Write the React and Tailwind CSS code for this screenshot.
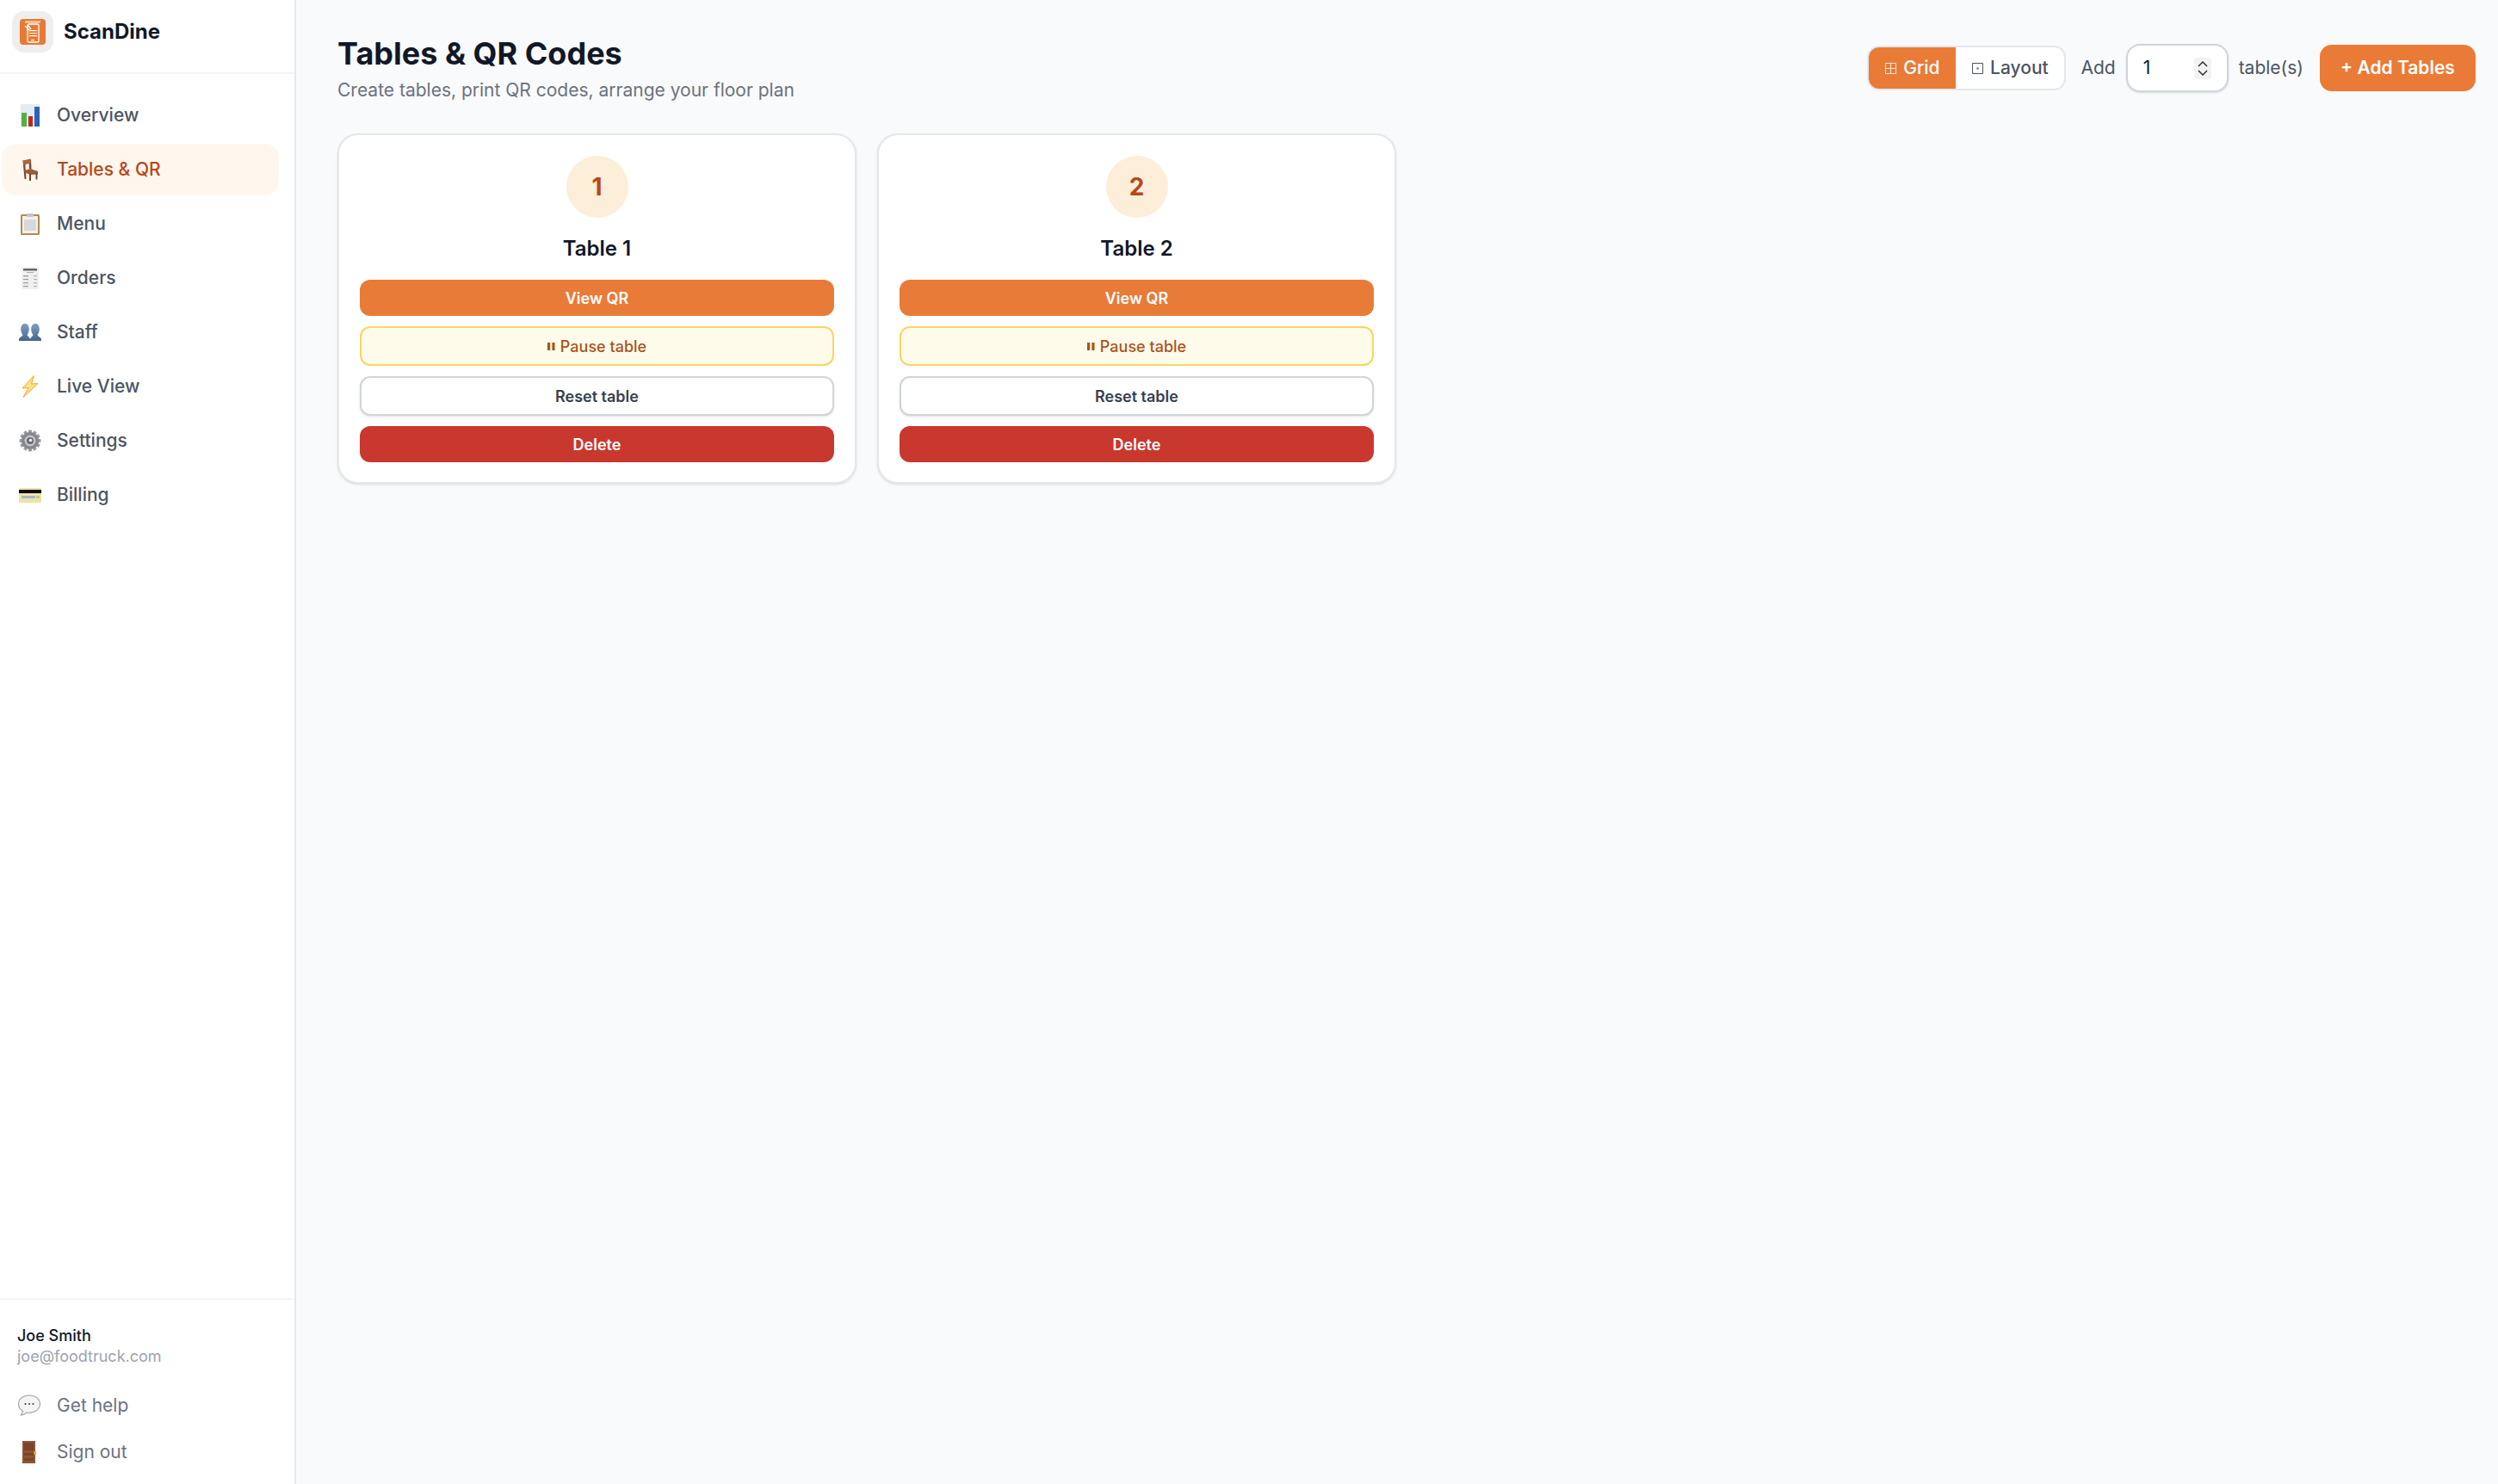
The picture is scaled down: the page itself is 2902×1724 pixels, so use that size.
const font = { fontFamily: 'Inter, "Liberation Sans", sans-serif' };

function ChartIcon() {
  return (
    <svg viewBox="0 0 22 26" className="h-[26px] w-[22px]">
      <rect width="22" height="26" fill="#e4ebf1" />
      <rect x="1" y="10" width="6" height="16" fill="#52b240" />
      <rect x="9" y="14" width="5" height="12" fill="#bf2a1f" />
      <rect x="16" y="3" width="6" height="23" fill="#2a62bd" />
    </svg>
  );
}

function ChairIcon() {
  return (
    <svg viewBox="0 0 20 26" className="h-[26px] w-[20px]">
      <path d="M1.500 2.500h2.500L5.500 24H3.500z" fill="#80472b" />
      <path d="M8.500 1.500h2.500l.5 11h-2.500z" fill="#80472b" />
      <path d="M1.500 2.500L10.500 .5l.5 5-8.500 2z" fill="#a9663f" />
      <path d="M4 14l6-2 9 3v3.500l-9 .5-6-2.500z" fill="#9c5c38" />
      <rect x="16.500" y="17" width="2" height="7.500" fill="#80472b" />
      <rect x="9" y="18" width="2" height="8" fill="#744026" />
    </svg>
  );
}

function ClipboardIcon() {
  return (
    <svg viewBox="0 0 22 26" className="h-[26px] w-[22px]">
      <rect y="2" width="22" height="24" rx="1.500" fill="#b18a52" />
      <rect x="2" y="4" width="18" height="20" fill="#f1f1f1" />
      <rect x="4" y="8" width="14" height="13" fill="#d8d8d8" />
      <rect x="7" y="1" width="8" height="4" rx="1.500" fill="#bcc4cc" />
    </svg>
  );
}

function ReceiptIcon() {
  return (
    <svg viewBox="0 0 20 26" className="h-[26px] w-[20px]">
      <rect width="20" height="26" fill="#f0f0f0" />
      <rect x="2" y="2" width="16" height="2.500" fill="#666" />
      <rect x="6" y="6" width="8" height="1" fill="#aaa" />
      {[10, 14, 18, 22].map((y) => (
        <g key={y}>
          <rect x="2" y={y} width="6" height="1.200" fill="#999" />
          <rect x="14" y={y} width="4" height="1.200" fill="#b5b5b5" />
        </g>
      ))}
    </svg>
  );
}

function StaffIcon() {
  const id = 'bust';
  return (
    <svg viewBox="0 0 26 20" className="h-[20px] w-[26px]">
      <defs>
        <linearGradient id={id} x1="0" y1="0" x2="0" y2="1">
          <stop offset="0" stopColor="#7fa0c2" />
          <stop offset="1" stopColor="#44658c" />
        </linearGradient>
      </defs>
      <path d="M0 20v-2c0-2 4-3 4.500-5C2.800 11 2.200 8.500 2.200 6.500 2.200 2.500 4 0 7 0s4.800 2.500 4.800 6.500c0 2-.6 4.500-2.300 6.500.5 2 3.500 3 3.500 5v2z" fill={`url(#${id})`} />
      <path d="M13 20v-2c0-2 3-3 3.500-5-1.700-2-2.300-4.500-2.300-6.500C14.200 2.500 16 0 19 0s4.800 2.500 4.800 6.500c0 2-.6 4.500-2.300 6.500.5 2 4.500 3 4.500 5v2z" fill={`url(#${id})`} />
    </svg>
  );
}

function ZapIcon() {
  return (
    <svg viewBox="0 0 20 26" className="h-[26px] w-[20px]">
      <path d="M14.500 0.500L1 15l7-.5L2 25.500 19 9.500l-7.500 .5z" fill="#ffe08a" stroke="#f5a623" strokeWidth="1" strokeLinejoin="round" />
    </svg>
  );
}

function GearIcon() {
  const teeth = [0, 30, 60, 90, 120, 150, 180, 210, 240, 270, 300, 330];
  return (
    <svg viewBox="0 0 26 26" className="h-[26px] w-[26px]">
      {teeth.map((a) => (
        <rect key={a} x="11" y="0.500" width="4" height="6" rx="1" fill="#9a9ca1" transform={`rotate(${a} 13 13)`} />
      ))}
      <circle cx="13" cy="13" r="10" fill="#85878c" />
      <circle cx="13" cy="13" r="6.500" fill="#c4c5c8" />
      <circle cx="13" cy="13" r="4" fill="#6a6c71" />
      <circle cx="13.500" cy="12.500" r="1.800" fill="#f0f0f0" />
    </svg>
  );
}

function CardIcon() {
  return (
    <svg viewBox="0 0 26 17" className="h-[17px] w-[26px]">
      <rect width="26" height="17" rx="1" fill="#ebe3a8" />
      <rect y="2" width="26" height="4" fill="#0c0c0c" />
      <rect x="3" y="9" width="16" height="3" fill="#aab4c8" />
      <rect x="20" y="9" width="4" height="3" fill="#c9c28a" />
    </svg>
  );
}

function BubbleIcon() {
  return (
    <svg viewBox="0 0 26 26" className="h-[26px] w-[26px]">
      <path d="M13 1C6 1 .5 5 .5 11c0 3.500 2 6.500 5 8.300-.3 1.700-1.200 3.300-2.200 4.700 2.600-.3 5-1.500 6.700-3 1 .2 2 .3 3 .3 7 0 12.500-4.500 12.500-10.300S20 1 13 1z" fill="#f5f5f5" stroke="#a8a8a8" strokeWidth="1.200" />
      <circle cx="8.500" cy="11" r="1.100" fill="#444" />
      <circle cx="13" cy="11" r="1.100" fill="#444" />
      <circle cx="17.500" cy="11" r="1.100" fill="#444" />
    </svg>
  );
}

function DoorIcon() {
  return (
    <svg viewBox="0 0 16 26" className="h-[26px] w-[16px]">
      <rect width="15" height="26" fill="#8e5436" />
      <rect x="2" y="2" width="11" height="9" fill="#7b4529" />
      <rect x="2" y="14" width="11" height="3" fill="#7b4529" />
      <rect x="2" y="20" width="11" height="3" fill="#7b4529" />
      <rect x="13.500" y="12" width="2.500" height="4" fill="#e2b33c" />
    </svg>
  );
}

function Logo() {
  return (
    <svg viewBox="0 0 30 30" className="h-[30px] w-[30px]">
      <rect width="30" height="30" rx="4" fill="#e97a33" />
      <rect x="6" y="2.500" width="18" height="2" fill="#fbd9c2" />
      <rect x="9" y="6" width="13" height="21" rx="1.500" fill="none" stroke="#fff" strokeWidth="1.300" />
      <path d="M6 8l6 6M9 7l4 5" stroke="#fff" strokeWidth="1.300" />
      <rect x="11" y="13" width="9" height="1.200" fill="#fff" />
      <rect x="11" y="16" width="9" height="1.200" fill="#fde5d4" />
      <rect x="11" y="19" width="9" height="1.200" fill="#fff" />
      <rect x="13" y="24" width="4" height="1.200" fill="#fff" />
    </svg>
  );
}

const navItems = [
  { label: 'Overview', icon: <ChartIcon /> },
  { label: 'Tables & QR', icon: <ChairIcon />, active: true },
  { label: 'Menu', icon: <ClipboardIcon /> },
  { label: 'Orders', icon: <ReceiptIcon /> },
  { label: 'Staff', icon: <StaffIcon /> },
  { label: 'Live View', icon: <ZapIcon /> },
  { label: 'Settings', icon: <GearIcon /> },
  { label: 'Billing', icon: <CardIcon /> },
];

function Sidebar() {
  return (
    <aside className="flex h-full w-[344px] shrink-0 flex-col border-r-2 border-[#e5e7eb] bg-white">
      <div className="flex h-[86px] items-center gap-[12px] border-b-2 border-[#f3f4f6] pb-[16px] pl-[14px] pt-[6px]">
        <div className="flex h-[48px] w-[48px] items-center justify-center rounded-[14px] bg-[#eeeeee]">
          <Logo />
        </div>
        <span className="text-[24px] font-bold text-[#111827]">ScanDine</span>
      </div>
      <nav className="flex flex-col gap-[3px] pl-[2px] pr-[18px] pt-[18px]">
        {navItems.map((item) => (
          <a
            key={item.label}
            className={
              item.active
                ? 'flex h-[60px] items-center gap-[18px] rounded-[16px] bg-[#fff7ed] pl-[20px] text-[21px] font-medium text-[#b7471d]'
                : 'flex h-[60px] items-center gap-[18px] rounded-[16px] pl-[20px] text-[21px] font-medium text-[#4b5563]'
            }
          >
            <span className="flex w-[26px] items-center justify-center">{item.icon}</span>
            {item.label}
          </a>
        ))}
      </nav>
      <div className="mt-auto border-t-2 border-[#f3f4f6] pt-[30px]">
        <div className="pl-[20px]">
          <p className="text-[18px] font-medium leading-[24px] text-[#111827]">Joe Smith</p>
          <p className="text-[18px] leading-[24px] text-[#9ca3af]">joe@foodtruck.com</p>
        </div>
        <div className="mt-[18px] flex flex-col pb-[10px] pl-[21px] text-[21px] text-[#6b7280]">
          <a className="flex h-[54px] items-center gap-[19px]">
            <span className="flex w-[26px] justify-center"><BubbleIcon /></span>
            Get help
          </a>
          <a className="flex h-[54px] items-center gap-[19px]">
            <span className="flex w-[26px] justify-center"><DoorIcon /></span>
            Sign out
          </a>
        </div>
      </div>
    </aside>
  );
}

function Stepper() {
  return (
    <span className="flex h-[25px] w-[20px] flex-col items-center justify-center gap-[3px] rounded-[4px] bg-[#f3f3f3]">
      <svg viewBox="0 0 12 7" className="w-[12px]"><path d="M1 6l5-5 5 5" fill="none" stroke="#333" strokeWidth="1.500" /></svg>
      <svg viewBox="0 0 12 7" className="w-[12px]"><path d="M1 1l5 5 5-5" fill="none" stroke="#333" strokeWidth="1.500" /></svg>
    </span>
  );
}

function Toolbar() {
  return (
    <div className="flex items-center">
      <div className="flex h-[52px] w-[231px] overflow-hidden rounded-[14px] border-2 border-[#e5e7eb] bg-white text-[21px] font-medium">
        <button className="flex w-[101px] items-center justify-center gap-[8px] bg-[#e97b36] text-white">
          <svg viewBox="0 0 13 13" className="w-[13px]"><path d="M.5.500h12v12H.5zM6.500.500v12M.5 6.500h12" fill="none" stroke="#fff" strokeWidth="1" opacity="0.800" /></svg>
          Grid
        </button>
        <button className="flex flex-1 items-center justify-center gap-[8px] text-[#4b5563]">
          <svg viewBox="0 0 13 13" className="w-[13px]"><path d="M.5.500h12v12H.5z" fill="none" stroke="#4b5563" strokeWidth="1" /><rect x="5.500" y="5.500" width="2" height="2" fill="#4b5563" /></svg>
          Layout
        </button>
      </div>
      <span className="ml-[17px] text-[21px] text-[#4b5563]">Add</span>
      <div className="ml-[12px] flex h-[56px] w-[119px] items-center justify-between rounded-[16px] border-2 border-[#d1d5db] bg-white pl-[18px] pr-[18px] shadow-sm">
        <input readOnly value="1" className="w-[40px] bg-transparent text-[21px] text-[#111827] outline-none" style={font} />
        <Stepper />
      </div>
      <span className="ml-[12px] text-[21px] text-[#4b5563]">table(s)</span>
      <button className="ml-[19px] h-[54px] w-[181px] rounded-[14px] bg-[#e97b36] text-[21px] font-semibold text-white">+ Add Tables</button>
    </div>
  );
}

function TableCard({ n }) {
  return (
    <div className="flex w-[603px] flex-col items-center rounded-[24px] border-2 border-[#e5e7eb] bg-white px-[24px] pb-[23px] pt-[24px] shadow-sm">
      <div className="flex h-[72px] w-[72px] items-center justify-center rounded-full bg-[#fdeed9] text-[28px] font-bold text-[#b7471d]">{n}</div>
      <h3 className="mt-[15px] text-[24px] font-semibold leading-[42px] text-[#111827]">Table {n}</h3>
      <div className="mt-[15px] flex w-full flex-col gap-[12px] text-[18px] font-medium">
        <button className="h-[42px] rounded-[12px] bg-[#e87b37] font-semibold text-white">View QR</button>
        <button className="flex h-[46px] items-center justify-center gap-[6px] rounded-[12px] border-2 border-[#fbd561] bg-[#fffbeb] text-[#a9541b]">
          <svg viewBox="0 0 10 10" className="w-[9px]"><rect width="3.500" height="10" fill="#a9541b" /><rect x="6" width="3.500" height="10" fill="#a9541b" /></svg>
          Pause table
        </button>
        <button className="h-[46px] rounded-[12px] border-2 border-[#d1d5db] bg-white font-semibold text-[#374151] shadow-sm">Reset table</button>
        <button className="h-[42px] rounded-[12px] bg-[#c9382f] font-semibold text-white">Delete</button>
      </div>
    </div>
  );
}

export default function App() {
  return (
    <div className="flex h-screen overflow-hidden bg-[#f9fafb]" style={font}>
      <Sidebar />
      <main className="flex-1 pl-[48px] pr-[26px] pt-[37px]">
        <div className="flex items-start justify-between">
          <div>
            <h1 className="text-[36px] font-bold leading-[50px] text-[#111827]">Tables &amp; QR Codes</h1>
            <p className="mt-[2px] text-[21px] leading-[32px] text-[#6b7280]">Create tables, print QR codes, arrange your floor plan</p>
          </div>
          <div className="pt-[14px]"><Toolbar /></div>
        </div>
        <div className="mt-[34px] flex gap-[24px]">
          <TableCard n={1} />
          <TableCard n={2} />
        </div>
      </main>
    </div>
  );
}
